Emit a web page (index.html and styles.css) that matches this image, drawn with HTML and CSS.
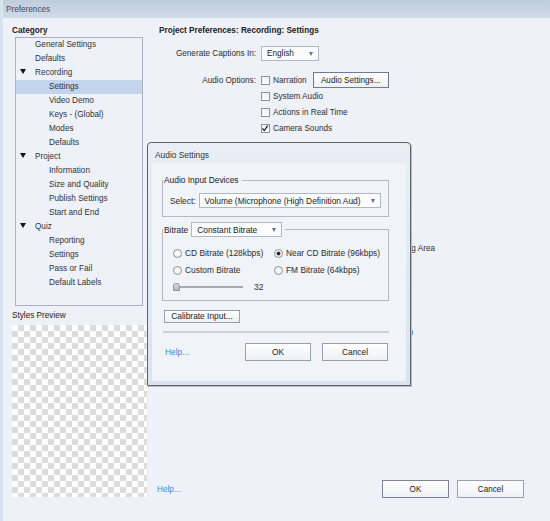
FILE: index.html
```
<!DOCTYPE html>
<html lang="en">
<head>
    <meta charset="UTF-8">
    <title>Preferences</title>
    <link rel="stylesheet" href="styles.css">
</head>
<body>
    <div class="window">
        <div class="titlebar">Preferences</div>
        <div class="main">
            <aside class="sidebar">
                <div class="side-label bold">Category</div>
                <ul class="tree">
                    <li class="item">General Settings</li>
                    <li class="item">Defaults</li>
                    <li class="item group">Recording</li>
                    <li class="item sub selected">Settings</li>
                    <li class="item sub">Video Demo</li>
                    <li class="item sub">Keys - (Global)</li>
                    <li class="item sub">Modes</li>
                    <li class="item sub">Defaults</li>
                    <li class="item group">Project</li>
                    <li class="item sub">Information</li>
                    <li class="item sub">Size and Quality</li>
                    <li class="item sub">Publish Settings</li>
                    <li class="item sub">Start and End</li>
                    <li class="item group">Quiz</li>
                    <li class="item sub">Reporting</li>
                    <li class="item sub">Settings</li>
                    <li class="item sub">Pass or Fail</li>
                    <li class="item sub">Default Labels</li>
                </ul>
                <div class="side-label preview-label">Styles Preview</div>
                <div class="preview"></div>
            </aside>

            <section class="content">
                <h1 class="heading">Project Preferences: Recording: Settings</h1>

                <div class="field captions">
                    <span class="field-label">Generate Captions In:</span>
                    <div class="select lang"><span>English</span><span class="arrow"></span></div>
                </div>

                <div class="field audio">
                    <span class="field-label">Audio Options:</span>
                    <div class="options">
                        <div class="option">
                            <span class="box"></span>Narration
                            <button class="btn audio-btn">Audio Settings...</button>
                        </div>
                        <div class="option"><span class="box"></span>System Audio</div>
                        <div class="option"><span class="box"></span>Actions in Real Time</div>
                        <div class="option">
                            <span class="box"><svg width="9" height="9" viewBox="0 0 9 9"><path d="M1.6 4.4 L3.6 6.8 L7.6 1.2" fill="none" stroke="#1c1c1c" stroke-width="1.4"/></svg></span>Camera Sounds
                        </div>
                    </div>
                </div>

                <!-- rows mostly covered by the audio dialog -->
                <div class="option more first"><span class="box"></span>Move New Windows Inside Recording Area</div>
                <div class="option more second"><span class="box"></span>Show Mouse Movement in Full Region</div>

                <div class="footer">
                    <a class="help">Help...</a>
                    <div class="actions">
                        <button class="btn main-btn default">OK</button>
                        <button class="btn main-btn">Cancel</button>
                    </div>
                </div>
            </section>
        </div>

        <div class="dialog">
            <div class="dialog-title">Audio Settings</div>
            <div class="dialog-body">
                <fieldset class="group-box devices">
                    <legend>Audio Input Devices</legend>
                    <div class="device-row">
                        <span>Select:</span>
                        <div class="select device"><span>Volume (Microphone (High Definition Aud)</span><span class="arrow"></span></div>
                    </div>
                </fieldset>

                <fieldset class="group-box bitrate">
                    <legend>Bitrate <div class="select rate"><span>Constant Bitrate</span><span class="arrow"></span></div></legend>
                    <div class="radios">
                        <div class="radio-item"><span class="radio"></span>CD Bitrate (128kbps)</div>
                        <div class="radio-item"><span class="radio on"></span>Near CD Bitrate (96kbps)</div>
                        <div class="radio-item"><span class="radio"></span>Custom Bitrate</div>
                        <div class="radio-item"><span class="radio"></span>FM Bitrate (64kbps)</div>
                    </div>
                    <div class="slider-row">
                        <div class="slider"><span class="thumb"></span></div>
                        <span>32</span>
                    </div>
                </fieldset>

                <button class="btn calibrate">Calibrate Input...</button>
                <div class="separator"></div>

                <div class="dialog-footer">
                    <a class="help">Help...</a>
                    <button class="btn dlg-btn">OK</button>
                    <button class="btn dlg-btn">Cancel</button>
                </div>
            </div>
        </div>
    </div>
</body>
</html>
```

FILE: styles.css
```
body {
    margin: 0;
    font-family: "Liberation Sans", Arial, sans-serif;
    font-size: 8.2px;
    color: #2e2e2e;
}

.window {
    position: relative;
    width: 550px;
    height: 521px;
    box-sizing: border-box;
    border-left: 3px solid #d8e3f0;
    background-color: #eef1f7;
    display: flex;
    flex-direction: column;
    overflow: hidden;
}

.titlebar {
    height: 18px;
    line-height: 19px;
    padding-left: 3px;
    color: #474b52;
    background: linear-gradient(#bfcddd, #cfdbe8);
}

.main {
    flex: 1;
    display: flex;
}

.bold {
    font-weight: bold;
}

/* left column */

.sidebar {
    width: 147px;
    padding: 7px 0 0 9px;
    box-sizing: border-box;
}

.side-label {
    line-height: 12px;
    color: #222;
}

.tree {
    list-style: none;
    margin: 0 0 0 3px;
    padding: 0;
    width: 128px;
    height: 269px;
    box-sizing: border-box;
    border: 1px solid #aab0bc;
}

.item {
    height: 14px;
    line-height: 14px;
    padding-left: 19px;
    color: #333;
}

.item.sub {
    padding-left: 33px;
}

.item.group::before {
    content: '';
    display: inline-block;
    margin: 0 9px 1px -15px;
    border-left: 3px solid transparent;
    border-right: 3px solid transparent;
    border-top: 5px solid #151515;
}

.item.selected {
    background-color: #c4d4ec;
}

.preview-label {
    margin-top: 4px;
}

.preview {
    margin-top: 3px;
    width: 135px;
    height: 172px;
    background: repeating-conic-gradient(#dcdcdc 0 25%, #ffffff 0 50%) 0 0 / 12px 12px;
}

/* right pane */

.content {
    flex: 1;
    display: flex;
    flex-direction: column;
    padding: 7px 26px 23px 7px;
}

.heading {
    margin: 0 0 0 2px;
    font-size: 8.2px;
    line-height: 12px;
    color: #222;
}

.field {
    display: grid;
    grid-template-columns: 99px auto;
    column-gap: 5px;
    align-items: start;
}

.field-label {
    text-align: right;
    line-height: 15px;
}

.captions {
    margin-top: 9px;
}

.audio {
    margin-top: 11px;
}

.audio .field-label {
    line-height: 17px;
}

.select {
    height: 15px;
    box-sizing: border-box;
    display: flex;
    align-items: center;
    padding: 0 5px;
    border: 1px solid #b2b8c3;
    background-color: #fbfcfd;
    color: #222;
    white-space: nowrap;
    overflow: hidden;
}

.select .arrow {
    margin-left: auto;
    flex-shrink: 0;
    border-left: 2.5px solid transparent;
    border-right: 2.5px solid transparent;
    border-top: 4px solid #6b6f76;
}

.lang {
    width: 58px;
}

.option {
    display: flex;
    align-items: center;
    height: 16px;
    color: #2e2e2e;
}

.box {
    width: 9px;
    height: 9px;
    box-sizing: border-box;
    margin-right: 3px;
    border: 1px solid #8d929a;
    background: linear-gradient(#f0f1f3, #ffffff);
    display: flex;
}

.box svg {
    margin: -1px 0 0 -1px;
}

.more {
    margin-left: 104px;
}

.more.first {
    margin-top: 104px;
    padding-left: 5px;
}

.more.second {
    margin-top: 68px;
}

.btn {
    font: inherit;
    color: #222;
    padding: 0;
    box-sizing: border-box;
    border: 1px solid #9aa0ab;
    background: linear-gradient(#ffffff, #eef0f4);
}

.audio-btn {
    margin-left: 6px;
    width: 76px;
    height: 16px;
    border-color: #6c7b98;
}

.footer {
    margin-top: auto;
    display: flex;
    align-items: center;
}

.help {
    color: #3f88d2;
}

.actions {
    margin-left: auto;
    display: flex;
    gap: 8px;
}

.main-btn {
    width: 67px;
    height: 18px;
}

.main-btn.default {
    border-color: #7d8392;
}

/* audio settings dialog, floats over the page */

.dialog {
    position: absolute;
    left: 144px;
    top: 142px;
    width: 264px;
    height: 244px;
    box-sizing: border-box;
    border: 1px solid #5e6166;
    border-radius: 4px 4px 0 0;
    background: linear-gradient(#e9eef5, #d9e4f1);
    padding: 0 4px 4px;
    display: flex;
    flex-direction: column;
    box-shadow: 1px 1px 0 #b9bec6;
    font-size: 8.4px;
}

.dialog-title {
    height: 20px;
    padding: 6px 0 0 3px;
    box-sizing: border-box;
    line-height: 12px;
    color: #333;
}

.dialog-body {
    flex: 1;
    background-color: #f0f3f8;
    padding: 11px 17px 0 10px;
    display: flex;
    flex-direction: column;
}

.group-box {
    margin: 0;
    padding: 0;
    border: 1px solid #b4b9c3;
}

.group-box legend {
    padding: 0 3px 0 1px;
    line-height: 12px;
    color: #222;
}

.device-row {
    display: flex;
    align-items: center;
    padding: 7px 7px 8px;
}

.device-row > span {
    margin-right: 3px;
}

.device {
    flex: 1;
}

.bitrate {
    margin-top: 5px;
}

.bitrate legend {
    display: flex;
    align-items: center;
}

.rate {
    width: 91px;
    margin-left: 3px;
}

.radios {
    display: grid;
    grid-template-columns: 101px auto;
    row-gap: 3px;
    padding: 9px 0 0 10px;
}

.radio-item {
    display: flex;
    align-items: center;
    height: 14px;
}

.radio {
    width: 9px;
    height: 9px;
    box-sizing: border-box;
    margin-right: 3px;
    border: 1px solid #8d929a;
    border-radius: 50%;
    background: radial-gradient(circle, #ffffff, #eceef1);
}

.radio.on {
    background: radial-gradient(circle, #2a2a2a 0 1.6px, #f7f7f7 2.3px);
}

.slider-row {
    display: flex;
    align-items: center;
    gap: 11px;
    height: 12px;
    padding: 4px 0 7px 10px;
}

.slider {
    width: 70px;
    height: 12px;
    display: flex;
    align-items: center;
    background: linear-gradient(#a7a9ad, #a7a9ad) 0 50% / 100% 2px no-repeat;
}

.thumb {
    width: 7px;
    height: 8px;
    box-sizing: border-box;
    border: 1px solid #8f9297;
    border-radius: 3px 3px 0 0;
    background: linear-gradient(#d8d9db, #b7b9bd);
}

.calibrate {
    margin: 9px 0 0 2px;
    width: 76px;
    height: 13px;
    line-height: 11px;
}

.separator {
    margin: 8px 0 0 1px;
    height: 2px;
    background-color: #cdd1d8;
}

.dialog-footer {
    margin-top: 10px;
    display: flex;
    align-items: center;
    padding-left: 3px;
}

.dialog-footer .help {
    margin-right: auto;
}

.dlg-btn {
    width: 66px;
    height: 18px;
    margin-left: 10px;
    margin-right: 1px;
}
```
